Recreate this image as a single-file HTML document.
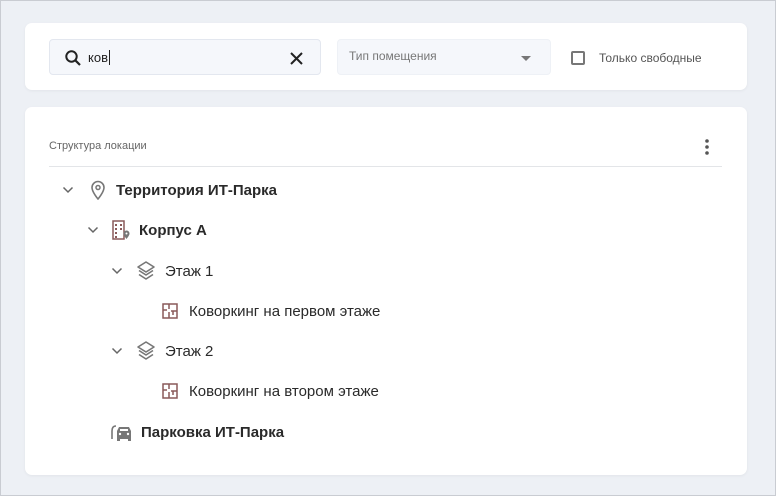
<!DOCTYPE html>
<html><head><meta charset="utf-8"><style>
*{box-sizing:border-box;margin:0;padding:0}
body{width:776px;height:496px;background:#edf0f5;font-family:"Liberation Sans",sans-serif;color:#2a2a2a;position:relative;overflow:hidden}
.frame{position:absolute;left:0;top:0;width:776px;height:496px;border:1px solid #c9ccd2;pointer-events:none}
.card{position:absolute;left:25px;width:722px;background:#fff;border-radius:7px;box-shadow:0 1px 3px rgba(0,0,0,.05)}
.abs{position:absolute}
.row{position:absolute;height:24px;display:flex;align-items:center;font-size:15px;white-space:nowrap}
.b{font-weight:bold}
</style></head><body>
<div class="frame"></div>
<div class="card" style="top:23px;height:67px">
  <div class="abs" style="left:24px;top:16px;width:272px;height:36px;background:#f5f7fb;border:1px solid #e3e7ef;border-radius:4px">
    <svg class="abs" style="left:14px;top:9px" width="18" height="18" viewBox="0 0 18 18"><circle cx="7.5" cy="7.5" r="5.2" fill="none" stroke="#222" stroke-width="2"/><path d="M11.3 11.3L16 16" stroke="#222" stroke-width="2.2"/></svg>
    <span class="abs" style="left:38px;top:10px;font-size:13px;color:#222">ков<span style="border-left:1px solid #222;margin-left:1px"></span></span>
    <svg class="abs" style="left:240px;top:12px" width="13" height="13" viewBox="0 0 13 13"><path d="M1 1L12 12M12 1L1 12" stroke="#222" stroke-width="2"/></svg>
  </div>
  <div class="abs" style="left:312px;top:16px;width:214px;height:36px;background:#f5f7fb;border:1px solid #eef1f6;border-radius:4px">
    <span class="abs" style="left:11px;top:9px;font-size:12px;color:#777">Тип помещения</span>
    <svg class="abs" style="left:183px;top:16px" width="10" height="6"><path d="M0 0H10L5 5Z" fill="#777"/></svg>
  </div>
  <div class="abs" style="left:546px;top:28px;width:14px;height:14px;border:2px solid #777;border-radius:2px"></div>
  <span class="abs" style="left:574px;top:28px;font-size:12px;color:#555">Только свободные</span>
</div>
<div class="card" style="top:107px;height:368px">
  <span class="abs" style="left:24px;top:33px;font-size:11px;color:#666">Структура локации</span>
  <svg class="abs" style="left:679px;top:31px" width="6" height="18"><circle cx="3" cy="3" r="1.8" fill="#555"/><circle cx="3" cy="9" r="1.8" fill="#555"/><circle cx="3" cy="15" r="1.8" fill="#555"/></svg>
  <div class="abs" style="left:24px;top:59px;width:673px;height:1px;background:#e3e5e8"></div>
</div>
<svg width="0" height="0" style="position:absolute"><defs>
<symbol id="chev" viewBox="0 0 12 8"><path d="M1.5 1.5L6 6L10.5 1.5" fill="none" stroke="#666" stroke-width="1.5"/></symbol>
<symbol id="layers" viewBox="0 0 20 20"><path d="M10 1L18 6L10 11L2 6Z M3 9.5L10 14L17 9.5 M3 13.5L10 18L17 13.5" fill="none" stroke="#777" stroke-width="1.6" stroke-linejoin="round"/></symbol>
<symbol id="room" viewBox="0 0 16 16"><path d="M1 1H15V15H1Z M7 1V6 M1 7H5 M7 9V15 M9 8H15 M11 8V12" fill="none" stroke="#8a5a5a" stroke-width="1.5"/></symbol>
</defs></svg>
<div class="row b" style="left:62px;top:178px"><svg width="12" height="8"><use href="#chev"/></svg>
<svg style="margin-left:16px" width="16" height="20" viewBox="0 0 16 20"><path d="M8 19C8 19 2 12 2 7.5A6 6 0 0 1 14 7.5C14 12 8 19 8 19Z" fill="none" stroke="#777" stroke-width="1.6"/><circle cx="8" cy="7.5" r="2" fill="none" stroke="#777" stroke-width="1.5"/></svg>
<span style="margin-left:10px">Территория ИТ-Парка</span></div>
<div class="row b" style="left:87px;top:218px"><svg width="12" height="8"><use href="#chev"/></svg>
<svg style="margin-left:12px" width="20" height="20" viewBox="0 0 20 20"><path d="M2 1H13V19H2Z" fill="none" stroke="#8a5a5a" stroke-width="1.5"/><g fill="#8a5a5a"><rect x="4" y="4" width="2" height="2"/><rect x="9" y="4" width="2" height="2"/><rect x="4" y="8" width="2" height="2"/><rect x="9" y="8" width="2" height="2"/><rect x="4" y="12" width="2" height="2"/><rect x="4" y="16" width="2" height="2"/></g><path d="M15.5 19C15.5 19 12.5 15.5 12.5 13.5A3 3 0 0 1 18.5 13.5C18.5 15.5 15.5 19 15.5 19Z" fill="#777"/><circle cx="15.5" cy="13.5" r="1" fill="#fff"/></svg>
<span style="margin-left:8px">Корпус А</span></div>
<div class="row" style="left:111px;top:259px"><svg width="12" height="8"><use href="#chev"/></svg>
<svg style="margin-left:13px" width="20" height="20"><use href="#layers"/></svg>
<span style="margin-left:9px">Этаж 1</span></div>
<div class="row" style="left:162px;top:299px"><svg width="16" height="16"><use href="#room"/></svg>
<span style="margin-left:11px">Коворкинг на первом этаже</span></div>
<div class="row" style="left:111px;top:339px"><svg width="12" height="8"><use href="#chev"/></svg>
<svg style="margin-left:13px" width="20" height="20"><use href="#layers"/></svg>
<span style="margin-left:9px">Этаж 2</span></div>
<div class="row" style="left:162px;top:379px"><svg width="16" height="16"><use href="#room"/></svg>
<span style="margin-left:11px">Коворкинг на втором этаже</span></div>
<div class="row b" style="left:111px;top:420px">
<svg width="22" height="20" viewBox="0 0 22 20"><path d="M5 4C2 4 1 6 1 9V17" fill="none" stroke="#777" stroke-width="1.6"/><path d="M6 9L8 5H18L20 9V17H6Z" fill="#777"/><rect x="6" y="15" width="3" height="4" fill="#777"/><rect x="17" y="15" width="3" height="4" fill="#777"/><rect x="9" y="7" width="8" height="2" fill="#fff"/><circle cx="9" cy="12" r="1.2" fill="#fff"/><circle cx="17" cy="12" r="1.2" fill="#fff"/></svg>
<span style="margin-left:8px">Парковка ИТ-Парка</span></div>
</body></html>
